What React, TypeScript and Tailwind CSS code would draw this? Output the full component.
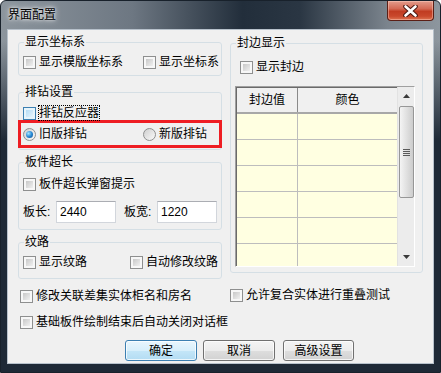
import React from 'react';

// win7 style checkbox square
function Box({ hot }: { hot?: boolean }) {
  return (
    <span
      className={`flex h-[13px] w-[13px] shrink-0 border p-[2px] ${
        hot ? 'border-[#3c7fb1] bg-[#e6f4fb]' : 'border-[#8e8f8f] bg-[#f7f7f7]'
      }`}
    >
      <span
        className={`block h-full w-full ${
          hot
            ? 'bg-linear-to-br from-[#b5dcf5] to-[#e4f3fc]'
            : 'bg-linear-to-br from-[#c8c8c8] to-[#f0f0f0]'
        }`}
      />
    </span>
  );
}

function Radio({ on }: { on?: boolean }) {
  return (
    <span className="flex h-[13px] w-[13px] shrink-0 items-center justify-center rounded-full border border-[#8e8f8f] bg-linear-to-br from-[#cfcfcf] to-[#fafafa]">
      {on && (
        <span className="h-[7px] w-[7px] rounded-full bg-[radial-gradient(circle_at_35%_35%,#a6e6ff_0%,#2a8ad6_50%,#0b4a87_100%)]" />
      )}
    </span>
  );
}

function Check({
  label,
  hot,
  focus,
  className = '',
}: {
  label: string;
  hot?: boolean;
  focus?: boolean;
  className?: string;
}) {
  return (
    <div className={`flex h-[14px] shrink-0 items-center ${className}`}>
      <Box hot={hot} />
      <span
        className={`ml-[3px] whitespace-nowrap leading-[14px] ${
          focus ? 'outline-1 outline-dotted outline-black' : ''
        }`}
      >
        {label}
      </span>
    </div>
  );
}

function Group({
  title,
  className = '',
  children,
}: {
  title: string;
  className?: string;
  children?: React.ReactNode;
}) {
  return (
    <fieldset className={`min-w-0 rounded-[3px] border border-[#d5dfe5] ${className}`}>
      <legend className="ml-[5px] px-[1px] leading-[14px]">{title}</legend>
      {children}
    </fieldset>
  );
}

function Btn({ label, primary, className = '' }: { label: string; primary?: boolean; className?: string }) {
  return (
    <button
      type="button"
      className={`flex h-[21px] items-center justify-center rounded-[3px] border leading-[14px] shadow-[inset_0_0_0_1px_rgba(255,255,255,0.75)] ${
        primary
          ? 'border-[#3c7fb1] bg-[linear-gradient(180deg,#e9f6fd_0%,#d8effb_50%,#c4e6f8_51%,#b3dcf3_100%)]'
          : 'border-[#707070] bg-[linear-gradient(180deg,#f4f4f4_0%,#ececec_50%,#dedede_51%,#d2d2d2_100%)]'
      } ${className}`}
    >
      {label}
    </button>
  );
}

function Scrollbar() {
  return (
    <div className="flex w-[17px] flex-col bg-[#ececec] border-l border-[#e2e2e2]">
      <div className="flex h-[18px] items-center justify-center">
        <svg width="7" height="4" viewBox="0 0 7 4">
          <path d="M3.5 0 L7 4 L0 4 Z" fill="#3a3a3a" />
        </svg>
      </div>
      <div className="mx-auto mt-[1px] flex h-[92px] w-[15px] items-center justify-center rounded-[2px] border border-[#979797] bg-linear-to-r from-[#f4f4f4] to-[#cdcdcd]">
        <div className="flex flex-col gap-[1px]">
          <span className="block h-[1px] w-[7px] bg-[#5a5a5a]" />
          <span className="block h-[1px] w-[7px] bg-[#5a5a5a]" />
          <span className="block h-[1px] w-[7px] bg-[#5a5a5a]" />
          <span className="block h-[1px] w-[7px] bg-[#5a5a5a]" />
        </div>
      </div>
      <div className="flex-1" />
      <div className="flex h-[18px] items-center justify-center">
        <svg width="7" height="4" viewBox="0 0 7 4">
          <path d="M0 0 L7 0 L3.5 4 Z" fill="#3a3a3a" />
        </svg>
      </div>
    </div>
  );
}

const rows = [0, 1, 2, 3, 4, 5];

export default function App() {
  return (
    <div className="relative h-[373px] w-[441px] overflow-hidden rounded-t-[6px] border border-[#18212b] bg-[linear-gradient(180deg,rgba(30,41,54,0)_0px,rgba(30,41,54,0)_40px,#1e2936_140px),linear-gradient(90deg,#8c959d_0%,#6d7782_30%,#222e3b_55%,#2a3643_68%,#7b848d_88%,#8d969e_100%)] font-['Liberation_Sans','Noto_Sans_CJK_SC',sans-serif] text-[12px] text-black">
      {/* title bar */}
      <div className="flex h-[28px] items-start justify-between pl-[7px] pr-[6px]">
        <span className="pt-[6px] leading-[16px] [text-shadow:0_0_6px_rgba(255,255,255,0.95),0_0_3px_rgba(255,255,255,0.9)]">
          界面配置
        </span>
        <button
          type="button"
          className="flex h-[20px] w-[47px] items-center justify-center rounded-b-[4px] border border-t-0 border-[#5b1f16] bg-[linear-gradient(180deg,#e39c8c_0%,#d46a55_40%,#c13c22_55%,#c9482c_80%,#de7452_100%)] shadow-[inset_0_0_0_1px_rgba(255,210,200,0.45)]"
        >
          <svg width="15" height="12" viewBox="0 0 15 12">
            <path d="M2.5 1.5 L12.5 10.5 M12.5 1.5 L2.5 10.5" stroke="#4a1710" strokeWidth="4.6" strokeLinecap="round" />
            <path d="M2.5 1.5 L12.5 10.5 M12.5 1.5 L2.5 10.5" stroke="#ffffff" strokeWidth="2.6" strokeLinecap="round" />
          </svg>
        </button>
      </div>

      {/* client area */}
      <div className="mx-[6px] h-[335px] border border-[#b7c1cb] bg-[#f0f0f0]">
        <div className="flex items-start gap-[8px] pl-[10px] pt-[5px]">
          {/* left column */}
          <div className="flex w-[204px] flex-col">
            <Group title="显示坐标系" className="h-[41px]">
              <div className="mt-[6px] flex pl-[4px]">
                <Check label="显示模版坐标系" className="w-[120px]" />
                <Check label="显示坐标系" />
              </div>
            </Group>

            <Group title="排钻设置" className="mt-[9px] h-[65px]">
              <Check label="排钻反应器" hot focus className="mt-[7px] h-[13px] pl-[4px]" />
              <div className="-mx-[1px] flex h-[28px] items-center border-[3px] border-[#ee1d23] pl-[2px]">
                <div className="flex w-[120px] items-center">
                  <Radio on />
                  <span className="ml-[3px] leading-[14px]">旧版排钻</span>
                </div>
                <div className="flex items-center">
                  <Radio />
                  <span className="ml-[3px] leading-[14px]">新版排钻</span>
                </div>
              </div>
            </Group>

            <Group title="板件超长" className="mt-[5px] h-[75px]">
              <Check label="板件超长弹窗提示" className="mt-[8px] pl-[4px]" />
              <div className="mt-[10px] flex items-center pl-[4px]">
                <span className="w-[33px] leading-[14px]">板长:</span>
                <input
                  readOnly
                  defaultValue="2440"
                  className="h-[22px] w-[60px] border border-[#d2d6dc] border-t-[#abadb3] bg-white pl-[3px] text-[12px] outline-none"
                />
                <span className="ml-[8px] w-[33px] leading-[14px]">板宽:</span>
                <input
                  readOnly
                  defaultValue="1220"
                  className="h-[22px] w-[60px] border border-[#d2d6dc] border-t-[#abadb3] bg-white pl-[3px] text-[12px] outline-none"
                />
              </div>
            </Group>

            <Group title="纹路" className="mt-[5px] h-[44px]">
              <div className="mt-[6px] flex pl-[4px]">
                <Check label="显示纹路" className="w-[107px]" />
                <Check label="自动修改纹路" />
              </div>
            </Group>
          </div>

          {/* right column */}
          <Group title="封边显示" className="mt-[1px] h-[237px] w-[193px]">
            <Check label="显示封边" className="mt-[10px] h-[13px] pl-[9px]" />
            <div className="ml-[4px] mt-[12px] flex h-[181px] w-[180px] border border-[#a0a0a0] border-b-white border-r-white shadow-[inset_1px_1px_0_#6a6a6a]">
              <div className="flex w-[161px] flex-col overflow-hidden pl-[1px] pt-[1px]">
                <div className="flex h-[26px] shrink-0 border-b-2 border-[#a8a8a8] bg-[#f0f0f0]">
                  <div className="flex w-[61px] items-center justify-center border-r border-[#8a8a8a]">封边值</div>
                  <div className="flex flex-1 items-center justify-center">颜色</div>
                </div>
                {rows.map((r) => (
                  <div key={r} className="flex h-[26px] shrink-0 border-b border-[#bdbdbd] bg-[#ffffe1]">
                    <div className="w-[61px] border-r border-[#bdbdbd]" />
                    <div className="flex-1" />
                  </div>
                ))}
              </div>
              <Scrollbar />
            </div>
          </Group>
        </div>

        {/* bottom options */}
        <div className="mt-[10px] flex pl-[12px]">
          <Check label="修改关联差集实体柜名和房名" className="w-[210px]" />
          <Check label="允许复合实体进行重叠测试" className="-mt-[1px]" />
        </div>
        <div className="mt-[12px] flex pl-[12px]">
          <Check label="基础板件绘制结束后自动关闭对话框" />
        </div>

        <div className="mt-[11px] flex pl-[117px]">
          <Btn label="确定" primary className="w-[72px]" />
          <Btn label="取消" className="ml-[6px] w-[72px]" />
          <Btn label="高级设置" className="ml-[8px] w-[71px]" />
        </div>
      </div>
    </div>
  );
}
